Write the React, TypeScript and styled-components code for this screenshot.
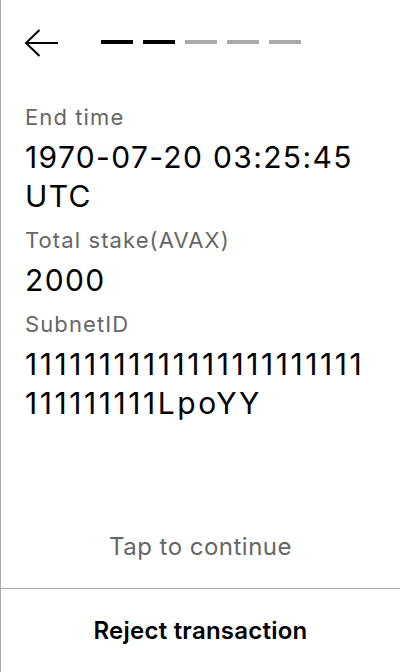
import React from 'react'
import styled, { createGlobalStyle } from 'styled-components'

const GlobalStyle = createGlobalStyle`
  html, body {
    margin: 0;
    padding: 0;
    background: #fff;
  }
  body {
    font-family: Inter, 'Noto Sans', sans-serif;
    color: #000;
  }
`

const Screen = styled.div`
  height: 672px;
  box-sizing: border-box;
  border-left: 1px solid #aaa;
  display: flex;
  flex-direction: column;
`

const Header = styled.div`
  display: flex;
  align-items: center;
  height: 28px;
  padding: 29px 0 0 23px;
`

const BackButton = styled.button`
  border: none;
  background: none;
  padding: 0;
  width: 36px;
  height: 28px;
  display: flex;
  align-items: center;
  cursor: pointer;
`

const Steps = styled.div`
  display: flex;
  gap: 10px;
  margin-left: 41px;
  margin-bottom: 2px;
`

const Step = styled.span<{ $done: boolean }>`
  display: block;
  width: 32px;
  height: 4px;
  background: ${(p) => (p.$done ? '#000' : '#aaa')};
`

const Content = styled.div`
  flex: 1;
  padding: 0 24px;
  margin-top: 45px;
`

const Label = styled.div`
  font-size: 22px;
  line-height: 30px;
  letter-spacing: 0.05em;
  color: #666;
  margin-bottom: 6px;
`

// ids are hashes, so the digits are spaced a little wider
const Value = styled.div<{ $wide?: boolean }>`
  font-size: 30px;
  line-height: 39px;
  letter-spacing: ${(p) => (p.$wide ? '0.085em' : '0.045em')};
  margin-bottom: 9px;
  overflow-wrap: anywhere;
`

const Hint = styled.div`
  text-align: center;
  font-size: 24px;
  line-height: 30px;
  letter-spacing: 0.02em;
  color: #666;
  padding-bottom: 26px;
`

const Footer = styled.button`
  border: none;
  border-top: 1px solid #aaa;
  background: #fff;
  height: 84px;
  padding: 0;
  font-family: Inter, 'Noto Sans', sans-serif;
  font-size: 24px;
  font-weight: 600;
  letter-spacing: 0.01em;
  color: #000;
  cursor: pointer;
`

const BackArrow = () => (
  <svg width='34' height='28' viewBox='0 0 34 28' fill='none'>
    <path d='M2 14h32M15.5 1L2 14l13.5 13' stroke='#000' strokeWidth='2' />
  </svg>
)

const fields = [
  { label: 'End time', value: '1970-07-20 03:25:45 UTC' },
  { label: 'Total stake(AVAX)', value: '2000' },
  { label: 'SubnetID', value: '11111111111111111111111111111111LpoYY', wide: true },
]

const App = () => {
  return (
    <>
      <GlobalStyle />
      <Screen>
        <Header>
          <BackButton aria-label='Back'>
            <BackArrow />
          </BackButton>
          <Steps>
            {[true, true, false, false, false].map((done, i) => (
              <Step key={i} $done={done} />
            ))}
          </Steps>
        </Header>
        <Content>
          {fields.map((f) => (
            <React.Fragment key={f.label}>
              <Label>{f.label}</Label>
              <Value $wide={f.wide}>{f.value}</Value>
            </React.Fragment>
          ))}
        </Content>
        <Hint>Tap to continue</Hint>
        <Footer>Reject transaction</Footer>
      </Screen>
    </>
  )
}

export default App
